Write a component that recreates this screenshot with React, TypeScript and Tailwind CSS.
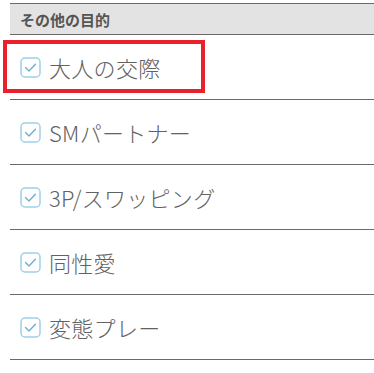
import React from "react";

const items = ["大人の交際", "SMパートナー", "3P/スワッピング", "同性愛", "変態プレー"];

function Check() {
  return (
    <svg width="21" height="21" viewBox="0 0 21 21" className="shrink-0">
      <rect x="1" y="1" width="19" height="19" rx="4" fill="#fff" stroke="#9fd0ea" strokeWidth="1.5" />
      <path d="M5.5 10.6 L9 14 L15.4 7.2" fill="none" stroke="#6eaed3" strokeWidth="1.4" strokeLinecap="round" strokeLinejoin="round" />
    </svg>
  );
}

export default function App() {
  return (
    <div
      className="relative w-[374px] h-[373px] bg-white overflow-hidden"
      style={{ fontFamily: '"Noto Sans CJK JP", "Noto Sans", sans-serif' }}
    >
      <div className="ml-[10px] mt-[3px]">
        <div className="h-[32px] bg-[#e3e3e3] border-t-[1.5px] border-b-[1.5px] border-[#6a6a6a] flex items-center pl-[10px]">
          <span className="text-[15px] font-bold text-[#555] leading-none">その他の目的</span>
        </div>
        {items.map((t) => (
          <div key={t} className="h-[65px] border-b-[1.5px] border-[#6a6a6a] flex items-center pl-[10px] gap-[8px]">
            <Check />
            <span className="text-[22px] font-light text-[#626262] leading-none tracking-[0.3px]">{t}</span>
          </div>
        ))}
      </div>
      <div className="absolute left-[3px] top-[40px] w-[202px] h-[53px] border-[4px] border-[#e8212b]" />
    </div>
  );
}
